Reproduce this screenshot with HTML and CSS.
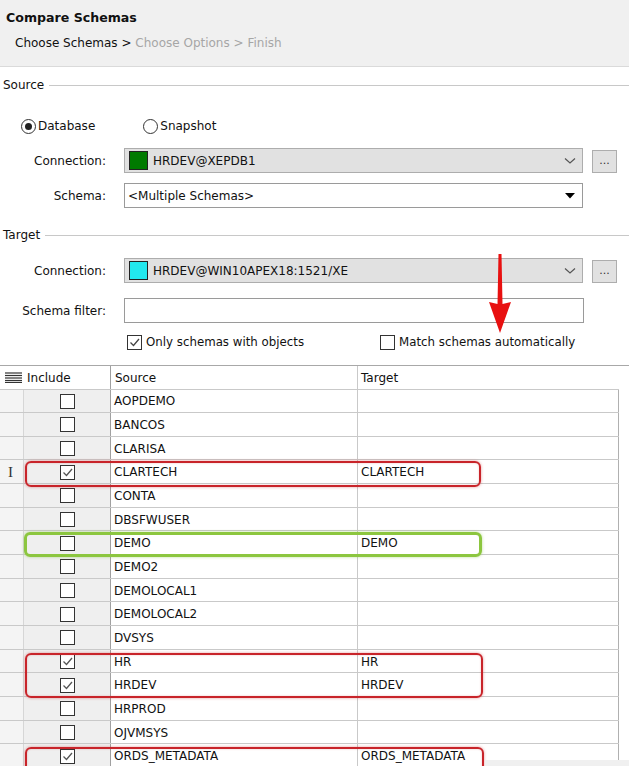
FILE: index.html
```html
<!DOCTYPE html>
<html>
<head>
<meta charset="utf-8">
<link rel="stylesheet" href="styles.css">
</head>
<body>
<div class="page">
  <div class="header">
    <div class="title">Compare Schemas</div>
    <div class="steps"><span class="cur">Choose Schemas &gt;</span> <span class="dis">Choose Options &gt; Finish</span></div>
  </div>

  <div class="legend legend-source"><span>Source</span><i></i></div>
  <div class="radios">
    <label class="radio"><span class="rb on"></span>Database</label>
    <label class="radio snap"><span class="rb"></span>Snapshot</label>
  </div>
  <div class="frow r-conn1">
    <div class="lbl">Connection:</div>
    <div class="combo gray">
      <span class="swatch green"></span><span class="ctext">HRDEV@XEPDB1</span>
      <svg class="chev" width="12" height="8" viewBox="0 0 12 8"><polyline points="1,1.5 6,6 11,1.5" fill="none" stroke="#555" stroke-width="1.2"/></svg>
    </div>
    <div class="dots">...</div>
  </div>
  <div class="frow r-schema">
    <div class="lbl">Schema:</div>
    <div class="combo white">
      <span class="ctext plain">&lt;Multiple Schemas&gt;</span>
      <svg class="tri" width="10" height="6" viewBox="0 0 10 6"><polygon points="0,0 10,0 5,5.5" fill="#000"/></svg>
    </div>
  </div>

  <div class="legend legend-target"><span>Target</span><i></i></div>
  <div class="frow r-conn2">
    <div class="lbl">Connection:</div>
    <div class="combo gray">
      <span class="swatch cyan"></span><span class="ctext">HRDEV@WIN10APEX18:1521/XE</span>
      <svg class="chev" width="12" height="8" viewBox="0 0 12 8"><polyline points="1,1.5 6,6 11,1.5" fill="none" stroke="#555" stroke-width="1.2"/></svg>
    </div>
    <div class="dots">...</div>
  </div>
  <div class="frow r-filter">
    <div class="lbl">Schema filter:</div>
    <div class="input"></div>
  </div>
  <div class="checks">
    <label class="chk c1"><span class="cb"><svg width="13" height="13" viewBox="0 0 13 13"><polyline points="2.5,6.5 5.5,9.5 11,3" fill="none" stroke="#444" stroke-width="1.3"/></svg></span>Only schemas with objects</label>
    <label class="chk c2"><span class="cb"></span>Match schemas automatically</label>
  </div>

  <div class="table">
    <div class="thead">
      <div class="c0"><svg width="17" height="11" viewBox="0 0 17 11"><g stroke="#333" stroke-width="1.2"><line x1="0" y1="1" x2="17" y2="1"/><line x1="0" y1="3.5" x2="17" y2="3.5"/><line x1="0" y1="6" x2="17" y2="6"/><line x1="0" y1="8.5" x2="17" y2="8.5"/><line x1="0" y1="10.5" x2="17" y2="10.5"/></g></svg></div>
      <div class="c1 h">Include</div>
      <div class="c2 h">Source</div>
      <div class="c3 h">Target</div>
    </div>
    <div class="rows" id="rows"></div>

    <div class="hl red hl-clartech"></div>
    <div class="hl green hl-demo"></div>
    <div class="hl red hl-hr"></div>
    <div class="hl red hl-ords"></div>
    <div class="scrollstrip"></div>
  </div>

  <svg class="arrow" width="30" height="84" viewBox="0 0 30 84">
    <polygon points="13.5,0 16.5,0 17.5,50 26,48 15,79 4,48 12.5,50" fill="#e81010"/>
  </svg>
</div>
<script>
(function(){
  var data = [
    ["AOPDEMO","",0],["BANCOS","",0],["CLARISA","",0],["CLARTECH","CLARTECH",1,"cursor"],
    ["CONTA","",0],["DBSFWUSER","",0],["DEMO","DEMO",0],["DEMO2","",0],
    ["DEMOLOCAL1","",0],["DEMOLOCAL2","",0],["DVSYS","",0],["HR","HR",1],
    ["HRDEV","HRDEV",1],["HRPROD","",0],["OJVMSYS","",0],["ORDS_METADATA","ORDS_METADATA",1]
  ];
  var check = '<svg width="13" height="13" viewBox="0 0 13 13"><polyline points="2.5,6.5 5.5,9.5 11,3" fill="none" stroke="#555" stroke-width="1.3"/></svg>';
  var html = '';
  data.forEach(function(d){
    html += '<div class="row"><div class="c0">' + (d[3] ? '<span class="ibeam">I</span>' : '') + '</div>' +
      '<div class="c1"><span class="cb">' + (d[2] ? check : '') + '</span></div>' +
      '<div class="c2">' + d[0] + '</div><div class="c3">' + d[1] + '</div></div>';
  });
  document.getElementById('rows').innerHTML = html;
})();
</script>
</body>
</html>
```
FILE: styles.css
```css
html, body {
  margin: 0;
  padding: 0;
  background: #fff;
}
body {
  font-family: "DejaVu Sans", "Liberation Sans", sans-serif;
  font-size: 12px;
  color: #111;
  width: 629px;
  height: 766px;
  overflow: hidden;
}
.page {
  position: relative;
  width: 629px;
  height: 766px;
  overflow: hidden;
}
.header {
  height: 67px;
  box-sizing: border-box;
  background: #f0f0f0;
  border-bottom: 1px solid #dadada;
  padding: 10px 0 0 6px;
}
.title {
  font-weight: bold;
  line-height: 16px;
  font-size: 12.6px;
}
.steps {
  margin-top: 9px;
  padding-left: 9px;
  line-height: 16px;
}
.steps .dis { color: #a6a6a6; }

.legend {
  display: flex;
  align-items: center;
  line-height: 16px;
  padding-left: 3px;
}
.legend i {
  flex: 1;
  height: 0;
  border-top: 1px solid #c8c8c8;
  margin-left: 5px;
  margin-top: 1px;
}
.legend-source { margin-top: 10px; }
.legend-target { margin-top: 19px; }

.radios {
  display: flex;
  margin-top: 25px;
  padding-left: 21px;
  height: 16px;
  align-items: center;
}
.radio {
  display: flex;
  align-items: center;
}
.radio.snap { margin-left: 48px; }
.rb {
  width: 13px;
  height: 13px;
  border: 1px solid #333;
  border-radius: 50%;
  box-sizing: content-box;
  margin-right: 2px;
  position: relative;
  background: #fff;
}
.rb.on::after {
  content: "";
  position: absolute;
  left: 3px;
  top: 3px;
  width: 7px;
  height: 7px;
  border-radius: 50%;
  background: #222;
}

.frow {
  display: flex;
  align-items: center;
  height: 25px;
}
.r-conn1 { margin-top: 14px; }
.r-schema { margin-top: 10px; }
.r-conn2 { margin-top: 15px; }
.r-filter { margin-top: 15px; }
.lbl {
  width: 106px;
  text-align: right;
  margin-right: 18px;
}
.combo {
  width: 459px;
  height: 25px;
  box-sizing: border-box;
  border: 1px solid #adadad;
  display: flex;
  align-items: center;
  position: relative;
}
.combo.gray { background: #e1e1e1; }
.combo.white { background: #fff; border-color: #9a9a9a; }
.swatch {
  width: 17px;
  height: 17px;
  border: 1px solid #222;
  margin-left: 4px;
  margin-right: 5px;
}
.swatch.green { background: #007a00; }
.swatch.cyan { background: #22e8ee; }
.ctext.plain { margin-left: 3px; }
.chev {
  position: absolute;
  right: 6px;
  top: 8px;
}
.tri {
  position: absolute;
  right: 7px;
  top: 9px;
}
.dots {
  width: 25px;
  height: 23px;
  box-sizing: border-box;
  margin-left: 9px;
  border: 1px solid #adadad;
  background: #e1e1e1;
  text-align: center;
  line-height: 20px;
  font-size: 11px;
  color: #333;
  align-self: flex-end;
}
.input {
  width: 460px;
  height: 25px;
  box-sizing: border-box;
  border: 1px solid #9a9a9a;
  background: #fff;
}

.checks {
  display: flex;
  align-items: center;
  margin-top: 12px;
  height: 14px;
  font-size: 11.8px;
}
.chk {
  display: flex;
  align-items: center;
}
.chk.c1 { margin-left: 127px; }
.chk.c2 { margin-left: 76px; }
.cb {
  width: 13px;
  height: 13px;
  border: 1px solid #333;
  background: #fff;
  display: inline-flex;
  align-items: center;
  justify-content: center;
  margin-right: 4px;
  box-sizing: content-box;
}
.cb svg { display: block; }

.table {
  position: relative;
  margin-top: 16px;
  border-top: 1px solid #a8a8a8;
}
.thead, .row {
  display: grid;
  grid-template-columns: 24px 86px 247px 262px;
  width: 619px;
}
.thead {
  height: 23.5px;
  box-sizing: border-box;
  border-bottom: 1px solid #c9c9c9;
}
.thead > div {
  display: flex;
  align-items: center;
  padding-top: 1px;
}
.thead .c0 { padding-left: 5px; }
.thead .c1 { padding-left: 3px; }
.thead .c2 { padding-left: 4px; border-left: 1px solid #a0a0a0; }
.thead .c3 { padding-left: 3px; border-left: 1px solid #c9c9c9; }
.row {
  height: 23.67px;
  box-sizing: border-box;
  border-bottom: 1px solid #c9c9c9;
}
.row > div {
  display: flex;
  align-items: center;
  min-width: 0;
  padding-top: 1px;
}
.row .c0 {
  background: #f4f4f4;
  border-right: 1px solid #d6d6d6;
  justify-content: center;
}
.row .c1 {
  background: #efefef;
  justify-content: center;
}
.row .c1 .cb { margin-right: 0; margin-left: 1px; }
.row .c2 {
  padding-left: 3px;
  border-left: 1px solid #a0a0a0;
}
.row .c3 {
  padding-left: 3px;
  border-left: 1px solid #c9c9c9;
  border-right: 1px solid #b0b0b0;
}
.ibeam {
  font-family: "Liberation Serif", serif;
  font-size: 15px;
  color: #333;
  margin-left: -2px;
}

.hl {
  position: absolute;
  box-sizing: border-box;
  border-radius: 6px;
  pointer-events: none;
}
.hl.red {
  border: 2px solid #c8242a;
  box-shadow: 0 0 3px rgba(200, 30, 30, 0.45), inset 0 0 2px rgba(200, 30, 30, 0.3);
}
.hl.green {
  border: 3px solid #8cc63f;
  box-shadow: 0 0 3px rgba(120, 190, 50, 0.5);
}
.hl-clartech { left: 25px; top: 95px; width: 456px; height: 26px; }
.hl-demo { left: 24px; top: 166px; width: 458px; height: 25px; }
.hl-hr { left: 25px; top: 287px; width: 458px; height: 45px; }
.hl-ords { left: 25px; top: 381px; width: 459px; height: 30px; }
.scrollstrip {
  position: absolute;
  left: 485px;
  right: 0;
  top: 394px;
  height: 20px;
  background: #f0f0f0;
}

.arrow {
  position: absolute;
  left: 485px;
  top: 254px;
}
```
